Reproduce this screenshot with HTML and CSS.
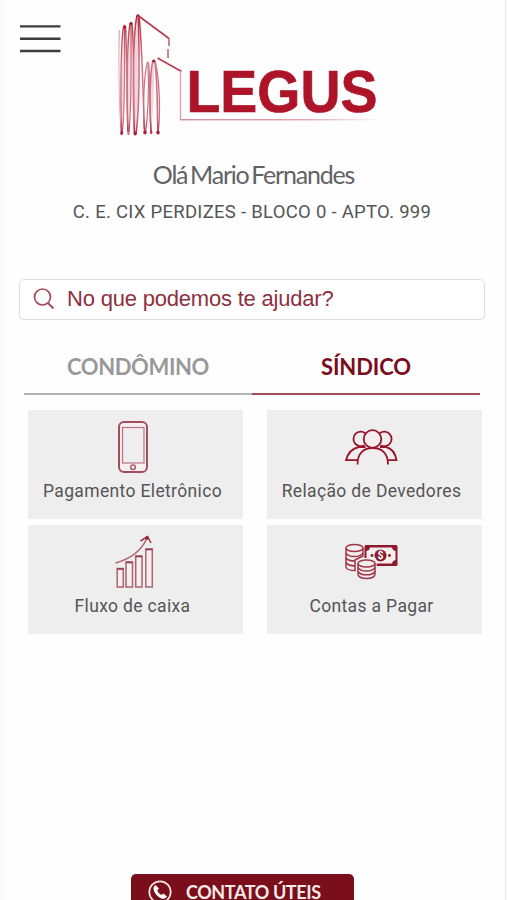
FILE: index.html
```html
<!DOCTYPE html>
<html lang="pt-BR">

<head>
    <meta charset="UTF-8">
    <title>Legus</title>
    <link rel="stylesheet" href="styles.css">
</head>

<body>

    <div class="app">
        <header class="header">
            <button class="menu" aria-label="Menu">
                <svg width="41" height="30" viewBox="0 0 41 30" stroke="#3c3c3e" stroke-width="2.400">
                    <path d="M0 1.400H40.500M0 13.800H40.500M0 26H40.500" />
                </svg>
            </button>

            <svg class="logo" width="276" height="130" viewBox="112 10 276 130" fill="none">
                <defs>
                    <linearGradient id="tower" x1="0" y1="14" x2="0" y2="136" gradientUnits="userSpaceOnUse">
                        <stop offset="0" stop-color="#b02a3e" />
                        <stop offset="0.4" stop-color="#cf7484" />
                        <stop offset="0.85" stop-color="#cc6c7d" />
                        <stop offset="1" stop-color="#ad2a40" />
                    </linearGradient>
                    <linearGradient id="line" x1="180" y1="0" x2="385" y2="0" gradientUnits="userSpaceOnUse">
                        <stop offset="0" stop-color="#d58c99" />
                        <stop offset="0.6" stop-color="#dfa3ad" />
                        <stop offset="1" stop-color="#fff" />
                    </linearGradient>
                </defs>
                <g class="tower-shade">
                    <path d="M124.500 27C120.500 50 120 110 121.700 133C125 110 126.500 50 124.500 27" />
                    <path d="M131 24C127 50 127 110 128 132C133 110 134 50 131 24" />
                    <path d="M138 16C133 45 132.500 110 135 133C139.500 110 141 45 138 16" />
                    <path d="M153.500 61C149 80 149 115 151 132C153 115 155 80 153.500 61" />
                </g>
                <g class="tower" stroke="url(#tower)">
                    <path d="M119.300 30C118.500 60 119 110 121.200 133" stroke-width="1" opacity=".6" />
                    <path d="M122 133C124.500 120 124.800 70 124.600 27" stroke-width="1.100" />
                    <path d="M121.500 132C120.500 100 120.500 45 123.500 27Q124.800 24 125.500 27C127 50 126.500 100 128 132" />
                    <path d="M128 132C126.500 100 127 40 130 24Q131.300 21 132 24C134.500 45 133 100 134.500 133" />
                    <path d="M129 132Q131.500 110 131 24" stroke-width="1.100" />
                    <path d="M134.500 132C132.500 100 133 35 136.800 16.500Q138 13.500 139 16.500C142.500 45 143 105 144.700 131" stroke-width="1.500" />
                    <path d="M136 133.500C139.500 110 139.500 60 138.300 18" stroke-width="1.500" />
                    <path d="M144.500 132C142.500 110 144 75 147.200 63Q148.300 61 148.800 64C150 80 149.500 115 151 132" stroke-width="1.200" />
                    <path d="M145.500 133C148 115 149 90 148 65" stroke-width="1.200" />
                    <path d="M151 132C149.500 110 149.500 75 152.700 61.500Q153.700 59 154.700 61.500C158 80 157 115 158 132" stroke-width="1.600" />
                    <path d="M158 133C160.500 115 160 80 155 61" stroke-width="1.300" />
                </g>
                <g fill="#a82038">
                    <ellipse cx="124.600" cy="27" rx="1.600" ry="1.500" />
                    <ellipse cx="131" cy="23.500" rx="1.600" ry="1.500" />
                    <ellipse cx="138" cy="16" rx="1.600" ry="1.600" />
                    <ellipse cx="153.700" cy="61" rx="1.600" ry="1.600" />
                    <ellipse cx="121.700" cy="133" rx="1.500" ry="2" />
                    <ellipse cx="128.500" cy="133.500" rx="1.300" ry="1.600" opacity=".6" />
                    <ellipse cx="135.200" cy="133.500" rx="1.700" ry="2" />
                    <ellipse cx="145" cy="132.500" rx="1.700" ry="2" />
                    <ellipse cx="151.200" cy="132.500" rx="1.300" ry="1.700" opacity=".8" />
                    <ellipse cx="158" cy="132.500" rx="1.700" ry="2" />
                </g>
                <path d="M138 15.500L169 38.500" stroke="#b43b4e" stroke-width="1.600" />
                <path d="M169 38V46M168 49V58" stroke="#c05c6c" stroke-width="1.500" />
                <path d="M157.500 58L181.500 71.500" stroke="#b43b4e" stroke-width="1.600" />
                <path d="M180.500 71V119.500" stroke="#dfa0ab" stroke-width="1.300" />
                <rect x="180" y="119" width="205" height="1.400" fill="url(#line)" />
                <text class="brand" x="186.500" y="111.800" textLength="191" lengthAdjust="spacingAndGlyphs">LEGUS</text>
            </svg>
        </header>

        <div class="greeting">Olá Mario Fernandes</div>
        <div class="unit">C. E. CIX PERDIZES - BLOCO 0 - APTO. 999</div>

        <div class="search">
            <svg width="22" height="22" viewBox="0 0 22 22" fill="none" stroke="#a34c59" stroke-width="1.700">
                <circle cx="9.500" cy="9" r="8" />
                <path d="M15 15L20.500 20.500" stroke-width="2" />
            </svg>
            <span>No que podemos te ajudar?</span>
        </div>

        <div class="tabs">
            <div class="tab">CONDÔMINO</div>
            <div class="tab active">SÍNDICO</div>
        </div>

        <div class="cards">
            <div class="card">
                <svg width="60" height="60" viewBox="0 0 60 60" fill="none" stroke="#a34c5c">
                    <rect x="16" y="4" width="28" height="50" rx="5" fill="#f7eff0" stroke-width="2" />
                    <rect x="19.500" y="9.500" width="21.500" height="35.500" fill="#eee" stroke="#b87480" stroke-width="1.200" />
                    <circle cx="30" cy="49.300" r="2.400" stroke-width="1.200" />
                </svg>
                <span>Pagamento Eletrônico</span>
            </div>
            <div class="card">
                <svg width="60" height="60" viewBox="-3 0 60 60" fill="none" stroke="#98142a" stroke-width="1.800">
                    <path d="M20.300 15.200A7.300 7.300 0 1 0 19.500 27.200M34.800 15.200A7.300 7.300 0 1 1 35.500 27.200" />
                    <circle cx="27.500" cy="21" r="8.800" fill="#f5eeef" />
                    <path d="M12.500 46.500C12.500 35 19 30 27.700 30S43 35 43 46.500" />
                    <path d="M20.500 29H14Q4 31 1 42.200H12.500M35 29H41Q49.500 31 51.500 42.200H43" />
                </svg>
                <span>Relação de Devedores</span>
            </div>
            <div class="card">
                <svg width="60" height="60" viewBox="0 0 60 60" fill="none" stroke="#ad6470" stroke-width="1.500">
                    <path d="M14.200 35.500H20.300V54H14.200ZM23 29H29.500V54H23ZM32.700 23H39V54H32.700ZM42.800 16H49.300V54H42.800Z" fill="#f5eff0" />
                    <path d="M14.200 36H20.300M23 29.500H29.500M32.700 23.500H39M42.800 16.500H49.300" stroke="#963345" />
                    <path d="M12.500 30Q36 23.500 44 5" />
                    <path d="M37.500 8L44.500 3.500L48 10" stroke="#963345" />
                    <circle cx="44" cy="5" r="1.700" fill="#8b2034" stroke="none" />
                </svg>
                <span>Fluxo de caixa</span>
            </div>
            <div class="card">
                <svg width="60" height="60" viewBox="-3 0 60 60" fill="none">
                    <rect x="19.500" y="12" width="33" height="21" rx="1.500" fill="#8e1b2d" />
                    <path d="M25 14.500H47Q47.500 17.500 50.500 18V27Q47.500 27.500 47 30.500H25Q24.500 27.500 21.500 27V18Q24.500 17.500 25 14.500Z" fill="#f5eeee" />
                    <circle cx="35.500" cy="22.500" r="6" fill="#8e1b2d" />
                    <circle cx="27" cy="22.500" r="1.400" fill="#8e1b2d" />
                    <circle cx="44.500" cy="22.500" r="1.400" fill="#8e1b2d" />
                    <text class="dollar" x="35.500" y="26.300">$</text>
                    <path d="M10 31L12 25H31L33 44H12Z" fill="#eee" />
                    <g fill="#eee" stroke="#a03447" stroke-width="1.500">
                        <path d="M1 15V34Q1.500 37.500 10 37.500V27L18 23V15" />
                        <ellipse cx="9.500" cy="15" rx="8.500" ry="3.500" />
                        <path d="M1 20Q3 23.500 9.500 23.500T18 20M1 25Q3 28 10 28M1 29.500Q3 32.800 10 33" fill="none" />
                        <path d="M13 30.500V41.500Q14 45.500 21.500 45.500T30 41.500V30.500" />
                        <ellipse cx="21.500" cy="30.500" rx="8.500" ry="3.500" />
                        <path d="M13 34.500Q15 38 21.500 38T30 34.500M13 38.300Q15 41.800 21.500 41.800T30 38.300" fill="none" />
                    </g>
                </svg>
                <span>Contas a Pagar</span>
            </div>
        </div>

        <div class="contact">
            <svg width="24" height="24" viewBox="0 0 24 24" fill="none">
                <circle cx="12" cy="12" r="10.700" stroke="#f6e6e4" stroke-width="1.700" />
                <path d="M7.500 5Q4.500 7 6 11Q8 16 13 18.200Q17 20 19 16.500L15.500 13.500L13.300 15Q10 13 9.200 10.300L11 8.500Z" fill="#fff" />
            </svg>
            <span>CONTATO ÚTEIS</span>
        </div>
    </div>

</body>

</html>
```

FILE: styles.css
```css
body {
    margin: 0;
    background-color: #fafafa;
    font-family: Roboto, sans-serif;
    color: #555;
}

.app {
    display: flex;
    flex-direction: column;
    height: 900px;
    margin: 0 1px 0 4px;
    box-sizing: border-box;
    border-right: 1px solid #ececec;
    background-color: #fefefe;
    overflow: hidden;
    white-space: nowrap;
}

.header {
    display: flex;
    align-items: flex-start;
    height: 159px;
    flex: none;
}

.menu {
    display: flex;
    width: 41px;
    margin: 25px 51px 0 16px;
    padding: 0;
    border: none;
    background: none;
}

.logo {
    margin-top: 10px;
}

.tower {
    stroke-width: 1.400;
}

.tower-shade {
    fill: #e5b0b9;
    opacity: 0.500;
}

.brand {
    font: bold 59px "Liberation Sans", sans-serif;
    fill: #ad1428;
    stroke: #ad1428;
    stroke-width: 0.700;
}

.greeting {
    height: 30px;
    line-height: 30px;
    padding-right: 2px;
    flex: none;
    text-align: center;
    font-family: Lato, sans-serif;
    font-size: 25px;
    letter-spacing: -1.200px;
    word-spacing: -2.500px;
    color: #626264;
}

.unit {
    height: 30px;
    line-height: 30px;
    margin-top: 8px;
    padding-right: 5px;
    flex: none;
    text-align: center;
    font-size: 18.500px;
    letter-spacing: 0.280px;
}

.search {
    display: flex;
    align-items: center;
    gap: 12px;
    flex: none;
    height: 41px;
    box-sizing: border-box;
    margin: 52px 20px 0 15px;
    padding: 0 13px 2px;
    border: 1.500px solid #dedede;
    border-radius: 5px;
    background-color: #fff;
    font-family: "Liberation Sans", sans-serif;
    font-size: 22px;
    letter-spacing: -0.200px;
    color: #8e3040;
}

.tabs {
    display: flex;
    flex: none;
    height: 47px;
    margin: 28px 25px 0 20px;
    font-family: Lato, sans-serif;
    font-size: 22px;
    font-weight: bold;
}

.tab {
    flex: 1;
    box-sizing: border-box;
    border-bottom: 2px solid #b5b3b4;
    line-height: 37px;
    text-align: center;
    letter-spacing: -0.400px;
    color: #999;
}

.active {
    border-color: #a24b57;
    letter-spacing: -0.100px;
    color: #7c0c1c;
}

.cards {
    display: grid;
    grid-template-columns: 215px 215px;
    gap: 6px 24px;
    flex: none;
    margin: 15px 0 0 24px;
}

.card {
    display: flex;
    flex-direction: column;
    align-items: center;
    height: 109px;
    padding: 8px 6px 0 0;
    box-sizing: border-box;
    background-color: #eee;
    font-size: 17.500px;
    letter-spacing: 0.350px;
    line-height: 26px;
}

.dollar {
    font: bold 10.500px Roboto, sans-serif;
    letter-spacing: 0;
    text-anchor: middle;
    fill: #fff;
}

.contact {
    display: flex;
    align-items: center;
    gap: 14px;
    flex: none;
    width: 223px;
    height: 36px;
    box-sizing: border-box;
    margin: 240px 0 0 127px;
    padding-left: 17px;
    border-radius: 5px;
    background-color: #7a0e1b;
    font-family: Lato, sans-serif;
    font-size: 18px;
    font-weight: bold;
    letter-spacing: -0.400px;
    color: #f8eae6;
}
```
